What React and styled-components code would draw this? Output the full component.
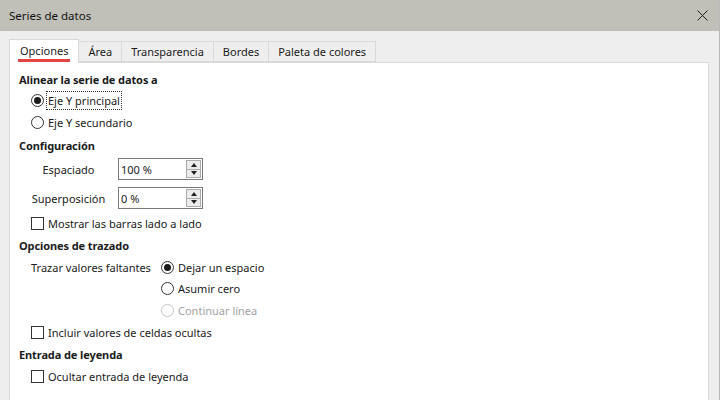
import React from "react";
import styled, { createGlobalStyle } from "styled-components";

const GlobalStyle = createGlobalStyle`
  html, body {
    margin: 0;
    padding: 0;
    height: 100%;
    overflow: hidden;
  }
  body {
    font-family: "Noto Sans", "Open Sans", sans-serif;
    font-size: 11px;
    color: #1b1b1b;
    background: #eeeeee;
  }
  #root {
    height: 100%;
  }
`;

const Window = styled.div`
  display: flex;
  flex-direction: column;
  height: 100vh;
  border-right: 1px solid #b9b9b9;
  box-sizing: border-box;
`;

const TitleBar = styled.div`
  height: 31px;
  flex-shrink: 0;
  display: flex;
  align-items: center;
  justify-content: space-between;
  padding: 0 9px 0 9px;
  background: #c0bfb8;
  font-size: 11.5px;
  color: #111;
`;

const CloseButton = styled.div`
  width: 12px;
  height: 12px;
  display: flex;
  align-items: center;
  justify-content: center;
  margin-right: 2px;
`;

const Body = styled.div`
  flex: 1;
  display: flex;
  flex-direction: column;
  padding: 8px 10px 0 9px;
  min-height: 0;
`;

const TabList = styled.div`
  display: flex;
  align-items: flex-end;
  height: 23px;
  position: relative;
  z-index: 1;
`;

const Tab = styled.div`
  position: relative;
  height: ${(p) => (p.$active ? "24px" : "21px")};
  box-sizing: border-box;
  padding: 0 ${(p) => (p.$active ? "10px" : "9px")};
  display: flex;
  align-items: center;
  justify-content: center;
  background: ${(p) => (p.$active ? "#ffffff" : "#eeeeee")};
  border: 1px solid #d9d9d9;
  border-bottom: ${(p) => (p.$active ? "none" : "1px solid #d9d9d9")};
  margin-left: ${(p) => (p.$active ? "0" : "-1px")};
  margin-bottom: ${(p) => (p.$active ? "-1px" : "0")};
  padding-bottom: ${(p) => (p.$active ? "2px" : "0")};
  font-size: 11px;
  white-space: nowrap;
`;

const TabMarker = styled.span`
  position: absolute;
  left: 8px;
  right: 8px;
  bottom: 1px;
  height: 3px;
  background: #e84343;
`;

const Panel = styled.div`
  flex: 1;
  background: #ffffff;
  border: 1px solid #d9d9d9;
  border-bottom: none;
  padding: 5px 9px 0 9px;
  display: flex;
  flex-direction: column;
`;

const SectionTitle = styled.div`
  height: 22px;
  display: flex;
  align-items: center;
  font-weight: bold;
  letter-spacing: -0.1px;
`;

const Row = styled.div`
  height: ${(p) => p.$h || 22}px;
  display: flex;
  align-items: center;
  padding-left: ${(p) => p.$indent ?? 12}px;
  margin-top: ${(p) => p.$mt || 0}px;
  color: ${(p) => (p.$disabled ? "#a2a2a2" : "inherit")};
  white-space: nowrap;
`;

const RadioCircle = styled.span`
  width: 13px;
  height: 13px;
  box-sizing: border-box;
  border-radius: 50%;
  border: 1px solid ${(p) => (p.$disabled ? "#c6c6c6" : "#333333")};
  background: #fff;
  display: flex;
  align-items: center;
  justify-content: center;
  margin-right: 3px;
  flex-shrink: 0;
  &::after {
    content: "";
    width: 7px;
    height: 7px;
    border-radius: 50%;
    background: #1b1b1b;
    display: ${(p) => (p.$checked ? "block" : "none")};
  }
`;

const CheckBox = styled.span`
  width: 13px;
  height: 13px;
  box-sizing: border-box;
  border: 1px solid #333333;
  background: #fff;
  margin-right: 3px;
  flex-shrink: 0;
`;

const Label = styled.span`
  padding: 1px 1px;
  outline: ${(p) => (p.$focus ? "1px dotted #333" : "none")};
  outline-offset: 0;
`;

const SpinRow = styled.div`
  height: 22px;
  display: flex;
  align-items: center;
  margin-top: ${(p) => p.$mt || 0}px;
`;

const SpinLabel = styled.span`
  width: 79px;
  margin-left: 10px;
  margin-right: 10px;
  text-align: center;
  white-space: nowrap;
`;

const SpinField = styled.div`
  width: 85px;
  height: 22px;
  box-sizing: border-box;
  border: 1px solid #7a7a7a;
  display: flex;
  align-items: center;
  justify-content: space-between;
  padding: 0 1px 0 2px;
  background: #fff;
`;

const SpinButtons = styled.div`
  display: flex;
  flex-direction: column;
  width: 15px;
  height: 18px;
`;

const SpinButton = styled.div`
  flex: 1;
  box-sizing: border-box;
  border: 1px solid #acacac;
  background: #ececec;
  display: flex;
  align-items: center;
  justify-content: center;
  &:first-child {
    border-bottom: none;
  }
  &::after {
    content: "";
    width: 0;
    height: 0;
    border-left: 3px solid transparent;
    border-right: 3px solid transparent;
    ${(p) =>
      p.$up
        ? "border-bottom: 4px solid #222;"
        : "border-top: 4px solid #222;"}
  }
`;

const OptionGrid = styled.div`
  display: grid;
  grid-template-columns: 130px auto;
  padding-left: 12px;
  margin-top: ${(p) => p.$mt || 0}px;
`;

const GridLabel = styled.div`
  height: 22px;
  display: flex;
  align-items: center;
  white-space: nowrap;
`;

const GridOptions = styled.div`
  display: flex;
  flex-direction: column;
`;

const Radio = ({ checked, disabled, focus, children, indent, mt, h }) => (
  <Row $indent={indent} $mt={mt} $h={h} $disabled={disabled}>
    <RadioCircle $checked={checked} $disabled={disabled} />
    <Label $focus={focus}>{children}</Label>
  </Row>
);

const Check = ({ children, mt }) => (
  <Row $mt={mt}>
    <CheckBox />
    <Label>{children}</Label>
  </Row>
);

const Spin = ({ label, value, mt }) => (
  <SpinRow $mt={mt}>
    <SpinLabel>{label}</SpinLabel>
    <SpinField>
      <span>{value}</span>
      <SpinButtons>
        <SpinButton $up />
        <SpinButton />
      </SpinButtons>
    </SpinField>
  </SpinRow>
);

const tabs = ["Opciones", "Área", "Transparencia", "Bordes", "Paleta de colores"];

export default function App() {
  return (
    <>
      <GlobalStyle />
      <Window>
        <TitleBar>
          <span>Series de datos</span>
          <CloseButton>
            <svg width="11" height="11" viewBox="0 0 11 11">
              <path d="M0.5 0.5 L10.5 10.5 M10.5 0.5 L0.5 10.5" stroke="#222" strokeWidth="1" fill="none" />
            </svg>
          </CloseButton>
        </TitleBar>
        <Body>
          <TabList>
            {tabs.map((t, i) => (
              <Tab key={t} $active={i === 0}>
                {t}
                {i === 0 && <TabMarker />}
              </Tab>
            ))}
          </TabList>
          <Panel>
            <SectionTitle>Alinear la serie de datos a</SectionTitle>
            <Radio checked focus h={21}>Eje Y principal</Radio>
            <Radio h={23}>Eje Y secundario</Radio>
            <SectionTitle>Configuración</SectionTitle>
            <Spin label="Espaciado" value="100 %" mt={2} />
            <Spin label="Superposición" value="0 %" mt={7} />
            <Check mt={3}>Mostrar las barras lado a lado</Check>
            <SectionTitle>Opciones de trazado</SectionTitle>
            <OptionGrid>
              <GridLabel>Trazar valores faltantes</GridLabel>
              <GridOptions>
                <Radio checked indent={0}>Dejar un espacio</Radio>
                <Radio indent={0} h={21}>Asumir cero</Radio>
                <Radio disabled indent={0}>Continuar línea</Radio>
              </GridOptions>
            </OptionGrid>
            <Check>Incluir valores de celdas ocultas</Check>
            <SectionTitle>Entrada de leyenda</SectionTitle>
            <Check>Ocultar entrada de leyenda</Check>
          </Panel>
        </Body>
      </Window>
    </>
  );
}
